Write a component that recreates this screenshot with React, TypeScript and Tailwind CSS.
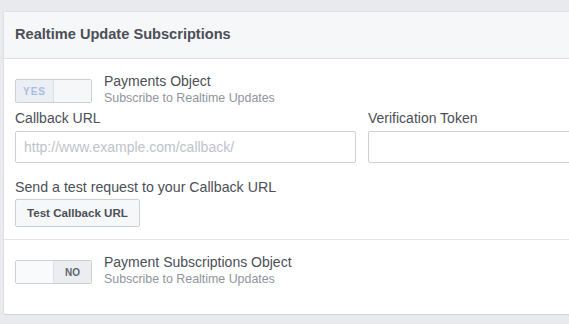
import React from 'react';

const Toggle: React.FC<{ on: boolean }> = ({ on }) => {
  return (
    <div className="mt-[7px] flex h-[24px] w-[77px] shrink-0 overflow-hidden rounded-[2px] border border-[#ccd0d5]">
      {on ? (
        <>
          <div className="flex w-[37px] items-center justify-center bg-[#ebeef2] text-[10px] font-bold tracking-[1px] text-[#a9bde6]">
            YES
          </div>
          <div className="flex-1 border-l border-[#dddfe2] bg-[#f6f7f9]" />
        </>
      ) : (
        <>
          <div className="w-[38px] border-r border-[#dddfe2] bg-[#f9fafb]" />
          <div className="flex flex-1 items-center justify-center bg-[#ebedf0] text-[10px] font-bold text-[#606770]">
            NO
          </div>
        </>
      )}
    </div>
  );
};

const SubscriptionRow: React.FC<{ on: boolean; title: string }> = ({ on, title }) => (
  <div className="flex items-start">
    <Toggle on={on} />
    <div className="ml-[12px]">
      <div className="text-[14px] leading-[18px] text-[#4b4f56]">{title}</div>
      <div className="text-[12.4px] leading-[16px] text-[#90949c]">Subscribe to Realtime Updates</div>
    </div>
  </div>
);

export default function App() {
  return (
    <div
      className="h-[324px] w-[569px] overflow-hidden bg-[#e9eaed] pl-[3px] pt-[11px]"
      style={{ fontFamily: '"Liberation Sans", Arial, sans-serif' }}
    >
      <div className="w-[718px] rounded-[3px] border border-[#dddfe2] border-b-[#d0d1d5] bg-white">
        <div className="flex h-[47px] items-center border-b border-[#dddfe2] bg-[#f6f7f9] pl-[11px] text-[14.6px] font-bold text-[#4b4f56]">
          Realtime Update Subscriptions
        </div>

        <div className="border-b border-[#e5e5e5] px-[11px] pb-[12px] pt-[13px]">
          <SubscriptionRow on title="Payments Object" />

          <div className="mt-[3px] flex gap-[12px]">
            <div className="flex-1">
              <div className="mb-[4px] text-[14px] leading-[18px] text-[#4b4f56]">Callback URL</div>
              <input
                className="h-[32px] w-full rounded-[2px] border border-[#ccd0d5] px-[8px] text-[14px] text-[#4b4f56] outline-none placeholder:text-[#bec3c9]"
                placeholder="http://www.example.com/callback/"
              />
            </div>
            <div className="flex-1">
              <div className="mb-[4px] text-[14px] leading-[18px] text-[#4b4f56]">Verification Token</div>
              <input className="h-[32px] w-full rounded-[2px] border border-[#ccd0d5] px-[8px] text-[14px] outline-none" />
            </div>
          </div>

          <div className="mt-[15px] text-[14.2px] leading-[18px] text-[#4b4f56]">
            Send a test request to your Callback URL
          </div>
          <button className="mt-[3px] h-[28px] rounded-[2px] border border-[#ccd0d5] bg-[#f6f7f9] px-[11px] text-[11.6px] font-bold text-[#4b4f56]">
            Test Callback URL
          </button>
        </div>

        <div className="px-[11px] pb-[27px] pt-[13px]">
          <SubscriptionRow on={false} title="Payment Subscriptions Object" />
        </div>
      </div>
    </div>
  );
}
